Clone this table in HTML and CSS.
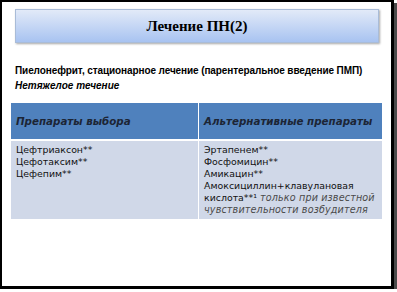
FILE: index.html
```html
<!DOCTYPE html>
<html lang="ru">
<head>
<meta charset="utf-8">
<link rel="stylesheet" href="styles.css">
</head>
<body>
<div class="slide">
  <div class="title">Лечение ПН(2)</div>
  <div class="intro">
    <p class="lead">Пиелонефрит, стационарное лечение (парентеральное введение ПМП)</p>
    <p class="sub">Нетяжелое течение</p>
  </div>
  <div class="table">
    <div class="th">Препараты выбора</div>
    <div class="th">Альтернативные препараты</div>
    <div class="td">Цефтриаксон**<br>Цефотаксим**<br>Цефепим**</div>
    <div class="td">Эртапенем**<br>Фосфомицин**<br>Амикацин**<br>Амоксициллин+клавулановая кислота**¹ <span class="note">только при известной чувствительности возбудителя</span></div>
  </div>
</div>
</body>
</html>
```

FILE: styles.css
```css
html, body { margin: 0; padding: 0; background: #fff; }
.slide {
  box-sizing: border-box;
  width: 394px;
  height: 289px;
  border: 2px solid #000;
  border-right-width: 3px;
  border-bottom-width: 3px;
  box-shadow: 3px 3px 0 #4a4a4a;
  background: #fff;
  padding: 7px 12px 0 9px;
  display: flex;
  flex-direction: column;
}
.title {
  margin-left: 4px;
  height: 32px;
  border: 1px solid #a9bcd8;
  background: linear-gradient(#e2eaf8, #a8c3f1);
  box-shadow: 1px 1px 2px rgba(0,0,0,0.35);
  display: flex;
  align-items: center;
  justify-content: center;
  font-family: "Liberation Serif", serif;
  font-weight: bold;
  font-size: 15px;
  color: #000;
}
.intro { margin: 20px 0 0 4px; font-family: "Liberation Sans", sans-serif; }
.intro p { margin: 0; font-weight: bold; font-size: 10px; line-height: 15px; color: #000; white-space: nowrap; letter-spacing: -0.1px; }
.intro .sub { font-style: italic; letter-spacing: 0; }
.table {
  margin-top: 10px;
  width: 371px;
  display: grid;
  grid-template-columns: 187px 1fr;
  column-gap: 1px;
  row-gap: 2px;
  font-family: "DejaVu Sans", sans-serif;
}
.th {
  background: #4f81bd;
  height: 36px;
  display: flex;
  align-items: center;
  padding-left: 5px;
  font-style: italic;
  font-weight: bold;
  font-size: 10.3px;
  color: #1c2535;
}
.td {
  background: #d0d8e8;
  height: 78px;
  box-sizing: border-box;
  padding: 3px 2px 0 5px;
  font-size: 9.4px;
  line-height: 12px;
  color: #111;
}
.note { font-style: italic; color: #4a4a4a; font-size: 9.6px; letter-spacing: 0.15px; }
```
